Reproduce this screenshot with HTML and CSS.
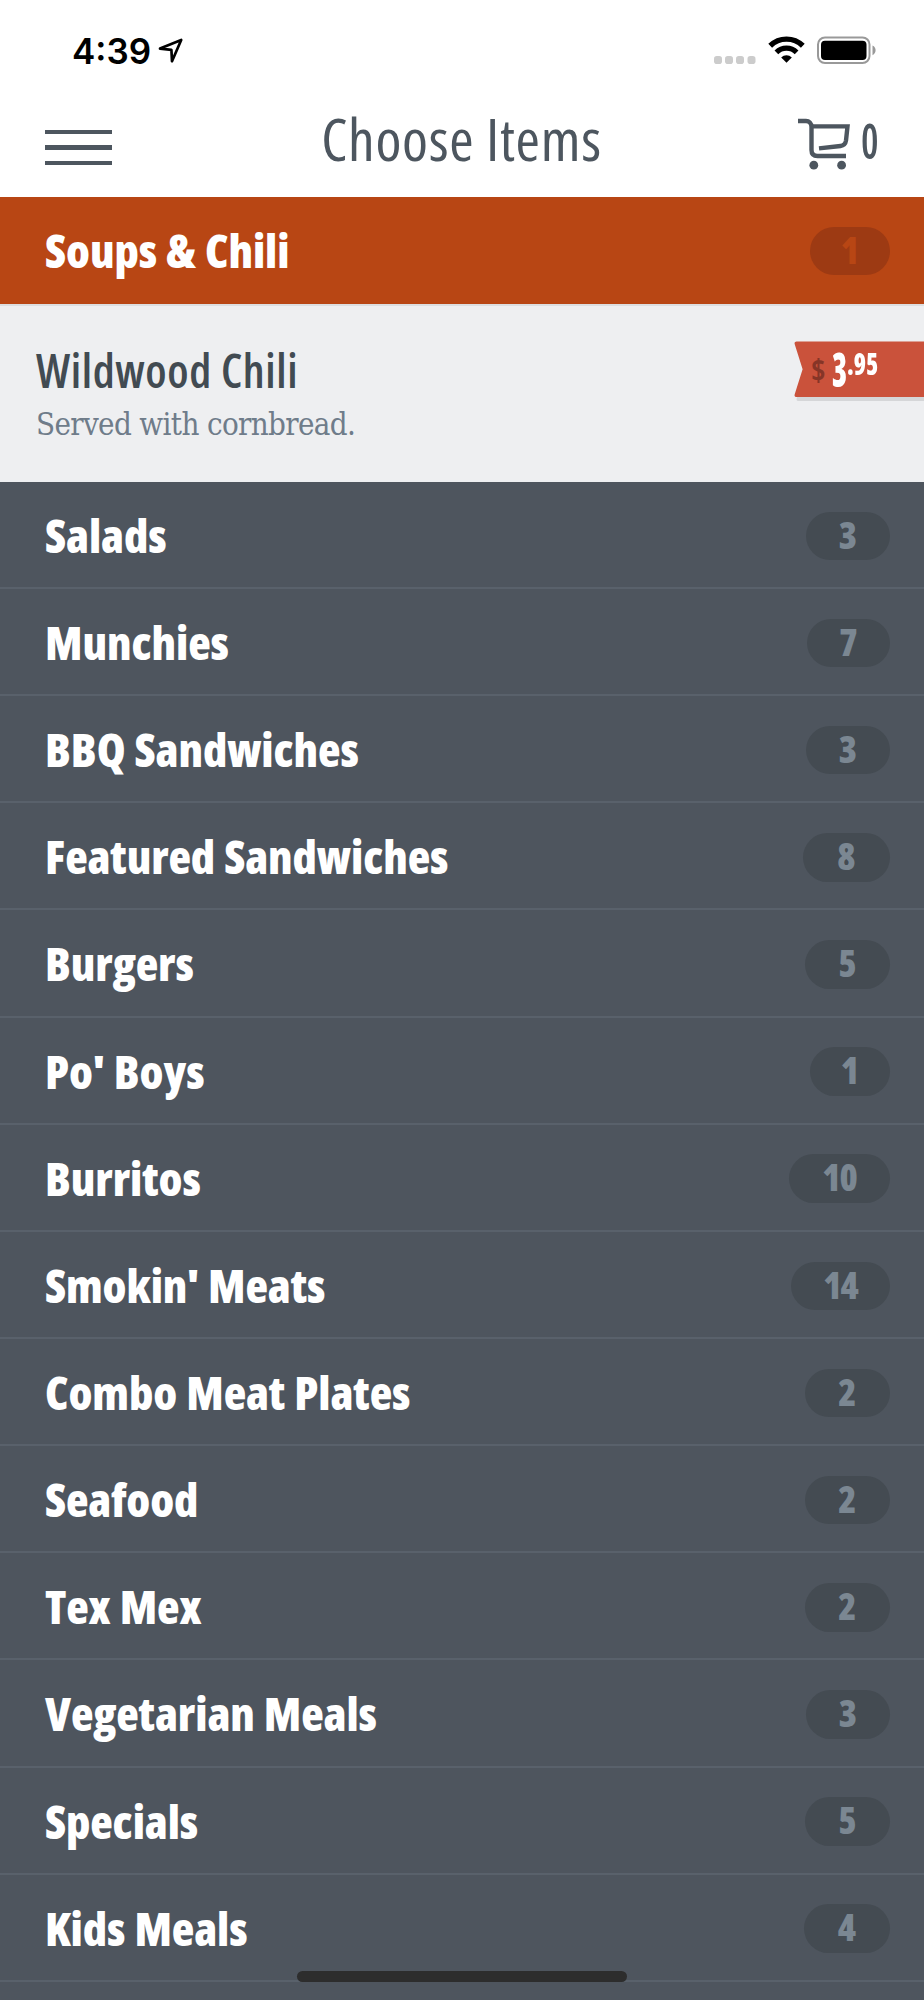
FILE: index.html
```html
<!DOCTYPE html>
<html lang="en">
<head>
    <meta charset="UTF-8">
    <meta name="viewport" content="width=device-width, initial-scale=1.0">
    <title>Choose Items</title>
    <link rel="stylesheet" href="styles.css">
</head>
<body>
    <div class="status-bar">
        <span class="time">4:39</span>
        <svg class="location" width="26" height="26" viewBox="0 0 26 26">
            <path d="M2 11.6 L23.2 3 L14 24.2 L13.4 12.8 Z" fill="none" stroke="#000" stroke-width="2.7" stroke-linejoin="round"/>
        </svg>
        <svg class="signal" width="42" height="8" viewBox="0 0 42 8">
            <rect x="0" y="0" width="8" height="8" rx="2.8"/>
            <rect x="11" y="0" width="8" height="8" rx="2.8"/>
            <rect x="22" y="0" width="8" height="8" rx="2.8"/>
            <rect x="33.5" y="0" width="8" height="8" rx="2.8"/>
        </svg>
        <svg class="wifi" width="37" height="27" viewBox="0 0 37 27">
            <path d="M2.2 9.8 A23.3 23.3 0 0 1 34.8 9.8" fill="none" stroke="#000" stroke-width="5.4"/>
            <path d="M8.4 16.4 A14.2 14.2 0 0 1 28.6 16.4" fill="none" stroke="#000" stroke-width="5.2"/>
            <path d="M13.2 21.4 A7.6 7.6 0 0 1 23.8 21.4 L18.5 26.8 Z"/>
        </svg>
        <svg class="battery" width="60" height="28" viewBox="0 0 60 28">
            <rect x="1" y="1.4" width="51.5" height="25.6" rx="7" fill="none" stroke="#999" stroke-width="2"/>
            <rect x="4" y="4.8" width="45.5" height="19.2" rx="4"/>
            <path d="M55.5 9.6 C59.6 11.4 59.6 17.4 55.5 19.2 Z" fill="#999"/>
        </svg>
    </div>

    <header class="nav">
        <div class="menu-button">
            <span></span>
            <span></span>
            <span></span>
        </div>
        <h1>Choose Items</h1>
        <div class="cart">
            <svg width="53" height="52" viewBox="0 0 53 52">
                <path d="M0 3 H8 C11 3 13.5 5 13.5 9 V32 Q13.5 38 19.5 38 H48" fill="none" stroke="#4d565f" stroke-width="4.4"/>
                <path d="M13.5 8.4 H49.5 L48 22.5 Q47.3 27.4 42.5 28 L21 30.4" fill="none" stroke="#4d565f" stroke-width="4.4"/>
                <circle cx="15.8" cy="47.2" r="4.4" fill="#4d565f"/>
                <circle cx="43.6" cy="47.2" r="4.4" fill="#4d565f"/>
            </svg>
            <span class="cart-count">0</span>
        </div>
    </header>

    <div class="row active"><span class="name">Soups &amp; Chili</span><span class="pill d1">1</span></div>

    <div class="item">
        <div class="item-text">
            <h2>Wildwood Chili</h2>
            <p>Served with cornbread.</p>
        </div>
        <div class="price">
            <svg class="flag" width="130" height="56" viewBox="0 0 130 56">
                <path d="M2.5 0.5 H130 V56 H2.5 Q-0.2 56 0.8 53 L8.6 28.2 L0.8 3.4 Q-0.2 0.5 2.5 0.5 Z" fill="#ca523b"/>
            </svg>
            <span class="currency">$</span>
            <span class="dollars">3</span>
            <span class="cents">.95</span>
        </div>
    </div>

    <div class="row"><span class="name">Salads</span><span class="pill d3">3</span></div>
    <div class="row"><span class="name">Munchies</span><span class="pill d7">7</span></div>
    <div class="row"><span class="name">BBQ Sandwiches</span><span class="pill d3">3</span></div>
    <div class="row"><span class="name">Featured Sandwiches</span><span class="pill d8">8</span></div>
    <div class="row"><span class="name">Burgers</span><span class="pill d5">5</span></div>
    <div class="row"><span class="name">Po' Boys</span><span class="pill d1">1</span></div>
    <div class="row"><span class="name">Burritos</span><span class="pill d10">10</span></div>
    <div class="row"><span class="name">Smokin' Meats</span><span class="pill d14">14</span></div>
    <div class="row"><span class="name">Combo Meat Plates</span><span class="pill d2">2</span></div>
    <div class="row"><span class="name">Seafood</span><span class="pill d2">2</span></div>
    <div class="row"><span class="name">Tex Mex</span><span class="pill d2">2</span></div>
    <div class="row"><span class="name">Vegetarian Meals</span><span class="pill d3">3</span></div>
    <div class="row"><span class="name">Specials</span><span class="pill d5">5</span></div>
    <div class="row"><span class="name">Kids Meals</span><span class="pill d4">4</span></div>

    <div class="home-indicator"></div>
</body>
</html>
```
FILE: styles.css
```css
* {
    box-sizing: border-box;
}

body {
    font-family: "Open Sans", "Noto Sans", sans-serif;
    font-stretch: 75%;
    background-color: #4e555e;
    margin: 0;
    height: 2000px;
    overflow: hidden;
    position: relative;
}

/* Status bar */
.status-bar {
    display: flex;
    height: 96px;
    padding: 36px 0 0 72px;
    background-color: #fff;
}

.time {
    width: 86px;
    font-family: Inter, sans-serif;
    font-stretch: 100%;
    font-size: 35px;
    font-weight: 600;
    line-height: 30px;
    letter-spacing: 0;
}

.location {
    margin-top: 1px;
}

.signal {
    margin: 20px 12px 0 auto;
    fill: #ccc;
}

.wifi {
    margin-right: 12px;
}

.battery {
    margin-right: 47px;
}

/* Header */
.nav {
    display: flex;
    align-items: flex-start;
    height: 100.7px;
    background-color: #fff;
    color: #4d565f;
}

.menu-button {
    display: flex;
    flex-direction: column;
    gap: 11.5px;
    width: 112px;
    margin-top: 33.5px;
    padding-left: 45px;
}

.menu-button span {
    height: 4.3px;
    background-color: #4d565f;
}

h1 {
    flex: 1;
    margin: 0;
    padding-left: 13px;
    text-align: center;
    font-size: 59px;
    font-weight: 430;
    line-height: 85px;
    letter-spacing: 0.7px;
}

.cart {
    display: flex;
    gap: 10px;
    width: 126px;
    padding-top: 22px;
}

.cart-count {
    font-size: 49px;
    font-weight: 650;
    line-height: 45px;
    transform: scaleX(0.8);
    transform-origin: left;
}

/* Category rows */
.row {
    display: flex;
    align-items: center;
    justify-content: space-between;
    height: 107.15px;
    padding: 2px 34px 0 45px;
    border-bottom: 2px solid #59616b;
    color: #fff;
}

.row.active {
    background-color: #b84614;
    border-bottom-color: #b84614;
}

.name {
    padding-bottom: 1px;
    font-size: 46.5px;
    font-weight: 800;
    line-height: 60px;
    letter-spacing: -0.1px;
    word-spacing: 1px;
    white-space: nowrap;
}

.pill {
    height: 48.5px;
    margin-top: 1px;
    border-radius: 25px;
    background-color: #444b52;
    color: #7b8792;
    font-size: 37px;
    font-weight: 800;
    line-height: 46.5px;
    text-align: center;
}

.active .pill {
    background-color: #9d3a13;
    color: #b84614;
}

.d1 { width: 80px; }
.d2 { width: 85px; }
.d3 { width: 84px; }
.d4 { width: 86px; }
.d5 { width: 85px; }
.d7 { width: 83px; }
.d8 { width: 87px; }

.d10,
.d14 {
    letter-spacing: -1px;
}

.d10 { width: 101px; }
.d14 { width: 99px; }

/* Open category */
.item {
    display: flex;
    justify-content: space-between;
    height: 178px;
    background-color: #eeeff1;
    border-top: 2px solid #dcdee0;
}

.item-text {
    padding: 34px 0 0 36px;
}

h2 {
    margin: 0;
    color: #424b52;
    font-size: 46px;
    font-weight: 620;
    line-height: 60px;
    letter-spacing: 0.6px;
}

p {
    margin: 0;
    color: #6f7c8a;
    font-family: "DejaVu Serif", serif;
    font-size: 31px;
    line-height: 48px;
    letter-spacing: -0.65px;
}

.price {
    position: relative;
    display: flex;
    width: 130px;
    height: 56px;
    margin-top: 35px;
    padding-left: 17px;
    color: #fff;
    font-weight: 700;
    line-height: 56px;
}

.flag {
    position: absolute;
    left: 0;
    top: 0;
    z-index: 0;
    filter: drop-shadow(2px 4px 0 #d5d6d8);
}

.price span {
    z-index: 1;
    transform-origin: left;
}

.currency {
    width: 21px;
    color: #863527;
    font-size: 31px;
}

.dollars {
    width: 23px;
    margin-right: -8px;
    font-size: 47px;
    font-weight: 800;
    transform: scaleX(0.65);
}

.cents {
    font-size: 30px;
    font-weight: 800;
    line-height: 46px;
    transform: scaleX(0.82);
}

.home-indicator {
    position: absolute;
    left: 297px;
    top: 1971px;
    width: 330px;
    height: 11px;
    border-radius: 6px;
    background-color: #2d2d2d;
}
```
